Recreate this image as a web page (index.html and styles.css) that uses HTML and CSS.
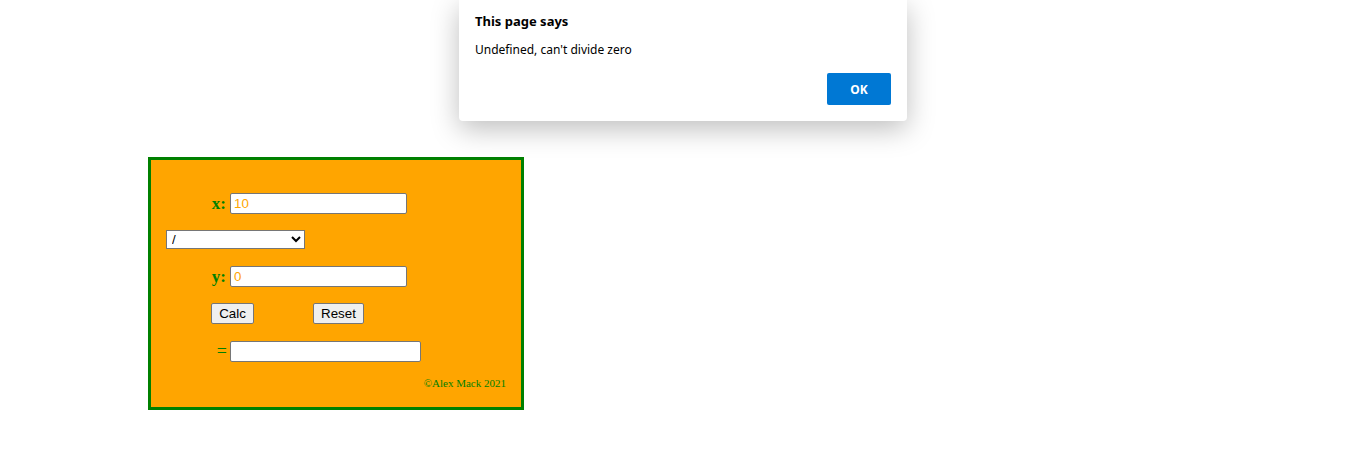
FILE: index.html
```html
<!DOCTYPE html>
<html>
<head>
<meta charset="utf-8">
<link rel="stylesheet" href="styles.css">
</head>
<body>
<div class="calc">
  <div class="row r1">
    <span class="lbl">x:</span>
    <input class="num" type="text" value="10">
  </div>
  <div class="row r2">
    <select class="op"><option>/</option></select>
  </div>
  <div class="row r3">
    <span class="lbl">y:</span>
    <input class="num" type="text" value="0">
  </div>
  <div class="row r4">
    <button class="btn calc-btn">Calc</button>
    <button class="btn reset-btn">Reset</button>
  </div>
  <div class="row r5">
    <span class="lbl eq">=</span>
    <input class="res" type="text" value="">
  </div>
  <div class="foot">©Alex Mack 2021</div>
</div>

<div class="dialog">
  <div class="d-title">This page says</div>
  <div class="d-msg">Undefined, can't divide zero</div>
  <div class="d-actions"><button class="ok">OK</button></div>
</div>
</body>
</html>
```
FILE: styles.css
```css
html, body {
  margin: 0;
  padding: 0;
  background: #fff;
}
body {
  padding-top: 157px;
  padding-left: 148px;
  font-family: "Liberation Serif", serif;
}
.calc {
  width: 376px;
  height: 253px;
  box-sizing: border-box;
  border: 3px solid #008000;
  background: #ffa500;
  padding-top: 33px;
}
.row {
  display: flex;
  align-items: center;
}
.r2 { margin-top: 16px; padding-left: 15px; height: 19px; }
.r3 { margin-top: 17px; }
.r4 { margin-top: 16px; padding-left: 60px; }
.r5 { margin-top: 17px; }
.lbl {
  width: 79px;
  box-sizing: border-box;
  padding-right: 4px;
  text-align: right;
  color: #008000;
  font-weight: bold;
  font-size: 17px;
  line-height: 21px;
}
.lbl.eq {
  font-weight: normal;
  font-size: 18px;
  padding-right: 3px;
}
input {
  box-sizing: border-box;
  height: 21px;
  border: 1px solid #767676;
  border-radius: 2px;
  padding: 1px 3px;
  margin: 0;
  font-family: "Liberation Sans", Arial, sans-serif;
  font-size: 13.33px;
  background: #fff;
  outline: none;
}
.num { width: 177px; color: #ffa500; }
.res { width: 191px; }
.op {
  box-sizing: border-box;
  width: 139px;
  height: 19px;
  margin: 0;
  font-family: "Liberation Sans", Arial, sans-serif;
  font-size: 13.33px;
  border: 1px solid #767676;
  border-radius: 0;
  background: #fff;
  color: #000;
  padding: 0 1px;
}
.btn {
  box-sizing: border-box;
  height: 21px;
  margin: 0;
  padding: 1px 6px;
  border: 1px solid #767676;
  border-radius: 2px;
  background: #efefef;
  font-family: "Liberation Sans", Arial, sans-serif;
  font-size: 13.33px;
  color: #000;
}
.calc-btn { width: 43px; }
.reset-btn { width: 51px; margin-left: 59px; }
.foot {
  margin-top: 15px;
  padding-right: 15px;
  text-align: right;
  font-size: 11px;
  line-height: 13px;
  color: #008000;
}

.dialog {
  position: absolute;
  top: 0;
  left: 459px;
  width: 448px;
  height: 121px;
  box-sizing: border-box;
  background: #fff;
  border-radius: 0 0 4px 4px;
  box-shadow: 0 8px 28px rgba(0, 0, 0, 0.26);
  padding: 13px 16px 0 16px;
  font-family: "Noto Sans", "Open Sans", sans-serif;
  color: #000;
}
.d-title {
  font-weight: bold;
  font-size: 13px;
  line-height: 17px;
}
.d-msg {
  margin-top: 12px;
  font-size: 12px;
  line-height: 16px;
}
.d-actions {
  display: flex;
  justify-content: flex-end;
  margin-top: 15px;
}
.ok {
  width: 64px;
  height: 32px;
  margin: 0;
  border: none;
  border-radius: 2px;
  background: #0078d4;
  color: #fff;
  font-family: "Noto Sans", "Open Sans", sans-serif;
  font-weight: bold;
  font-size: 12px;
}
```
